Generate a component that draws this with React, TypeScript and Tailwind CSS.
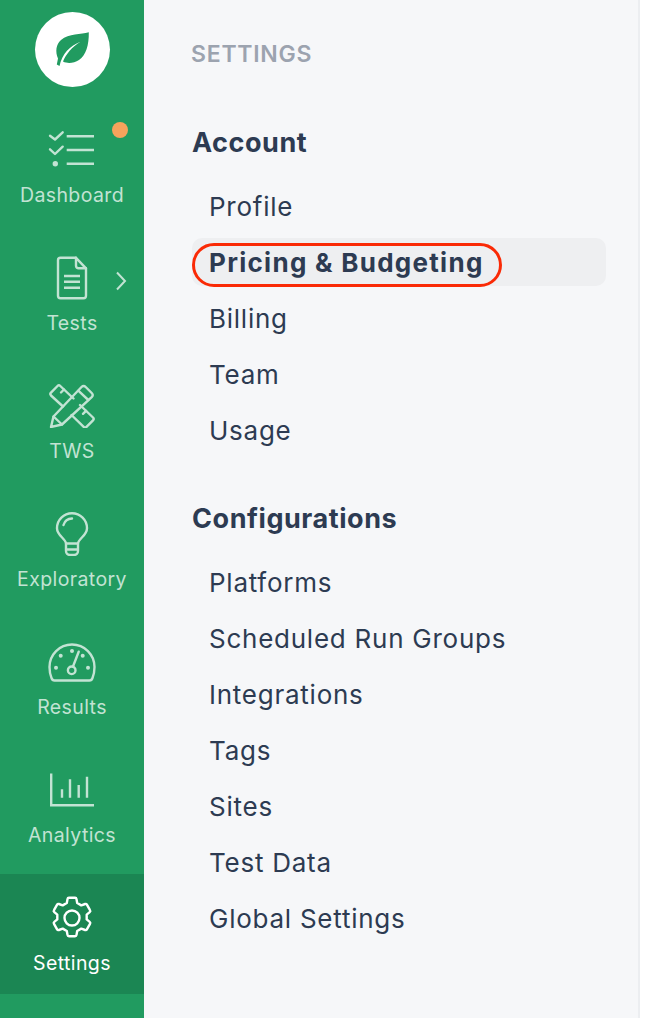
import React from 'react';

// every icon is drawn in a 48x46 box
const Icons: Record<string, React.ReactNode> = {
  dashboard: (
    <>
      <path d="M2 9.700l5 3.800 7.700-7.200M2 23.300l5 4.700 7.700-7.300" />
      <path d="M18.700 10.300H46M18.700 24H46M18.700 37.700H46" strokeLinecap="butt" />
      <circle cx="7.300" cy="37.700" r="2.700" fill="currentColor" stroke="none" />
    </>
  ),
  tests: (
    <>
      <path d="M12.500 3.800H28l10 10.500v27.400a2.500 2.500 0 0 1-2.500 2.500h-23a2.500 2.500 0 0 1-2.500-2.500V6.300a2.500 2.500 0 0 1 2.500-2.500z" />
      <path d="M28 3.800v8a2.500 2.500 0 0 0 2.500 2.500H38" />
      <path d="M16 22h16M16 27.800h16M16 33.700h16" strokeLinecap="butt" />
    </>
  ),
  tws: (
    <>
      <path d="M3 45l2.500-10.500L33.500 5a3 3 0 0 1 4.200 0l6 6a3 3 0 0 1 0 4.200L14 42.500z" />
      <path d="M5.500 34.500L14 42.500M30.300 8.700l10 9.300" />
      <path d="M15 24.500L3 13.500a2 2 0 0 1 0-2.800l6.500-6.700a2 2 0 0 1 2.800 0L25.500 16.500" />
      <path d="M32 23l13 12.500a2 2 0 0 1 0 2.800l-6.500 6.500a2 2 0 0 1-2.800 0L23.500 33" />
      <path d="M16 7.500l-3 3M38 28.800l-3 3" />
    </>
  ),
  exploratory: (
    <>
      <path d="M18 33.500c-.5-5-9-8-9-15.300a15 15 0 0 1 30 0c0 7.300-8.500 10.300-9 15.300z" />
      <path d="M18 33.500V41a4 4 0 0 0 4 4h4a4 4 0 0 0 4-4v-7.500M18 39.500h12" />
      <path d="M15.500 15a9 9 0 0 1 8.500-6.500" />
    </>
  ),
  results: (
    <>
      <path d="M6.500 42.500h35c1.500 0 2.500-1 3-2.500 1-2.500 2-7 2-11a22.500 22.500 0 0 0-45 0c0 4 1 8.500 2 11 .5 1.500 1.500 2.500 3 2.500z" />
      <circle cx="23.700" cy="32.300" r="3.800" />
      <path d="M25 28.500l5.700-14.800" />
      <g fill="currentColor" stroke="none">
        <circle cx="24" cy="13" r="2" />
        <circle cx="12.700" cy="17.700" r="2" />
        <circle cx="34.700" cy="17.700" r="2" />
        <circle cx="8" cy="29.700" r="2" />
        <circle cx="40" cy="29.700" r="2" />
      </g>
    </>
  ),
  analytics: (
    <>
      <path d="M3.200 7.500v31.700H46" strokeLinecap="butt" strokeLinejoin="miter" />
      <path d="M14 31.700v-8.400M22 31.700V13.300M30.700 31.700V19M39 31.700V10.700" strokeLinecap="butt" />
    </>
  ),
  settings: (
    <path d="M21 3.800h6a1.500 1.500 0 0 1 1.500 1.300l.7 3.900 4.100 2.400 3.800-1.400a1.500 1.500 0 0 1 1.800.7l3.100 5.400a1.500 1.500 0 0 1-.3 2l-3 2.500v4.800l3 2.500a1.500 1.500 0 0 1 .3 2l-3.100 5.400a1.500 1.500 0 0 1-1.800.7l-3.800-1.400-4.100 2.400-.7 3.900a1.500 1.500 0 0 1-1.500 1.300h-6a1.500 1.500 0 0 1-1.500-1.300l-.7-3.900-4.100-2.400-3.800 1.400a1.500 1.500 0 0 1-1.800-.7l-3.100-5.400a1.500 1.500 0 0 1 .3-2l3-2.500v-4.800l-3-2.500a1.500 1.500 0 0 1-.3-2l3.100-5.400a1.500 1.500 0 0 1 1.800-.7l3.800 1.400 4.100-2.400.7-3.900a1.500 1.500 0 0 1 1.500-1.300zM31.500 24a7.500 7.500 0 1 1-15 0 7.500 7.500 0 0 1 15 0z" />
  ),
};

const navItems = [
  { key: 'dashboard', label: 'Dashboard' },
  { key: 'tests', label: 'Tests' },
  { key: 'tws', label: 'TWS' },
  { key: 'exploratory', label: 'Exploratory' },
  { key: 'results', label: 'Results' },
  { key: 'analytics', label: 'Analytics' },
  { key: 'settings', label: 'Settings', active: true },
];

const account = ['Profile', 'Pricing & Budgeting', 'Billing', 'Team', 'Usage'];
const configurations = ['Platforms', 'Scheduled Run Groups', 'Integrations', 'Tags', 'Sites', 'Test Data', 'Global Settings'];

const MenuGroup = ({ title, items }: { title: string; items: string[] }) => (
  <div>
    <h2 className="h-[48px] text-[27px] leading-[50px] font-bold tracking-[0.55px] text-[#2d3b52]">{title}</h2>
    <ul className="mt-[16px] flex flex-col gap-[8px]">
      {items.map((item) => {
        const active = item === 'Pricing & Budgeting';
        return (
          <li
            key={item}
            className={`relative h-[48px] w-[414px] rounded-[10px] pl-[17px] text-[26px] leading-[50px] text-[#2d3b52] ${active ? 'bg-[#eeeff1] font-bold tracking-[1.280px]' : 'tracking-[0.75px]'}`}
          >
            {item}
            {active && (
              <span className="absolute left-0 top-[5px] h-[44px] w-[310px] rounded-full border-[3.500px] border-[#fa2a06]" />
            )}
          </li>
        );
      })}
    </ul>
  </div>
);

export default function App() {
  return (
    <div className="flex h-[1018px] w-[646px] overflow-hidden bg-white font-['Inter',sans-serif]">
      <aside className="flex h-full w-[144px] shrink-0 flex-col bg-[#219b60]">
        <div className="flex h-[106px] justify-center pt-[12px]">
          <div className="h-[75px] w-[75px] rounded-full bg-white">
            <svg width="75" height="75" viewBox="0 0 75 75" fill="#219b60">
              <path d="M53.800 20.300C46 22.500 34 21.500 26 28c-5 4-6 12-3 18.500l-1.200 6 2.700 1.500C27 42 35 33.500 45.500 29.700 37 35 31 42 28 49.500c5 2.500 11 1.500 16-1.500 7-4.500 10-15 9.800-27.700z" />
            </svg>
          </div>
        </div>
        <nav className="flex flex-col gap-[8px]">
          {navItems.map((item) => (
            <a
              key={item.key}
              className={`relative flex h-[120px] flex-col items-center pt-[20px] text-[19.500px] tracking-[0.4px] ${item.active ? 'bg-[#1b8653] text-white' : 'text-[#c2e3d3]'}`}
            >
              <svg
                width="48"
                height="46"
                viewBox="0 0 48 46"
                fill="none"
                stroke="currentColor"
                strokeWidth="2.400"
                strokeLinecap="round"
                strokeLinejoin="round"
              >
                {Icons[item.key]}
              </svg>
              <span className="mt-[10px] leading-[26px]">{item.label}</span>
              {item.key === 'dashboard' && (
                <span className="absolute left-[112px] top-[16px] h-[16px] w-[16px] rounded-full bg-[#f6a35c]" />
              )}
              {item.key === 'tests' && (
                <svg className="absolute left-[114px] top-[37px]" width="14" height="20" viewBox="0 0 14 20" fill="none" stroke="currentColor" strokeWidth="2">
                  <path d="M3 1.500l8 8.500-8 8.500" />
                </svg>
              )}
            </a>
          ))}
        </nav>
      </aside>
      <main className="h-full w-[496px] shrink-0 border-r-2 border-[#eceef1] bg-[#f6f7f9] pl-[47px] pt-[40px]">
        <h1 className="text-[23px] leading-[28px] font-semibold tracking-[0.75px] text-[#9ca3af]">SETTINGS</h1>
        <div className="mt-[50px] flex flex-col gap-[40px] pl-[1px]">
          <MenuGroup title="Account" items={account} />
          <MenuGroup title="Configurations" items={configurations} />
        </div>
      </main>
    </div>
  );
}
